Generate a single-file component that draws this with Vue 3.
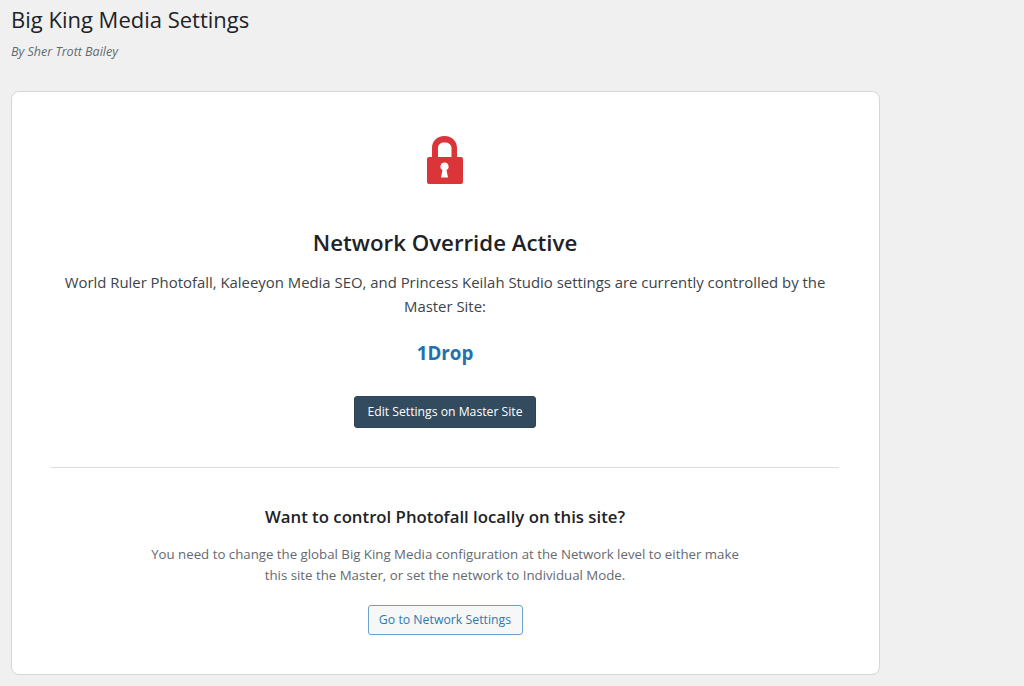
<script setup>
</script>

<template>
  <div class="page">
    <h1 class="title">Big King Media Settings</h1>
    <p class="byline">By Sher Trott Bailey</p>
    <section class="card">
      <svg class="lock" viewBox="0 0 38 48" width="38" height="48" aria-hidden="true">
        <path fill="#dc3539" d="M6 22V12C6 5 11 0 18.500 0S31 5 31 12V22H25.500V12C25.500 8.500 22.500 6.500 18.500 6.500S12 8.500 12 12V22Z"/>
        <path fill="#dc3539" fill-rule="evenodd" d="M3 21h32a2 2 0 0 1 2 2v23a2 2 0 0 1-2 2H3a2 2 0 0 1-2-2V23a2 2 0 0 1 2-2zM18.500 26.500a4 4 0 0 0-2 7.500l-1.500 7.500h7L20.500 34a4 4 0 0 0-2-7.500z"/>
      </svg>
      <h2 class="heading">Network Override Active</h2>
      <p class="lead">World Ruler Photofall, Kaleeyon Media SEO, and Princess Keilah Studio settings are currently controlled by the Master Site:</p>
      <div class="site">1Drop</div>
      <a class="btn primary">Edit Settings on Master Site</a>
      <hr class="rule" />
      <h3 class="subheading">Want to control Photofall locally on this site?</h3>
      <p class="note">You need to change the global Big King Media configuration at the Network level to either make this site the Master, or set the network to Individual Mode.</p>
      <a class="btn secondary">Go to Network Settings</a>
    </section>
  </div>
</template>

<style>
html, body { margin: 0; background: #f0f0f0; }
</style>

<style scoped>
.page {
  height: 686px;
  overflow: hidden;
  box-sizing: border-box;
  padding: 0 144px 0 11px;
  background: #f0f0f0;
  font-family: "Open Sans", "Noto Sans", sans-serif;
  color: #1d2327;
}
.title {
  margin: 0;
  padding-top: 4px;
  font-size: 22px;
  font-weight: 400;
  line-height: 30px;
}
.byline {
  margin: 9px 0 0;
  font-size: 12.500px;
  font-style: italic;
  line-height: 18px;
  color: #646970;
}
.card {
  margin-top: 30px;
  box-sizing: border-box;
  height: 584px;
  padding: 44px 40px 0 39px;
  display: flex;
  flex-direction: column;
  align-items: center;
  background: #fff;
  border: 1px solid #d5d6d8;
  border-radius: 8px;
  text-align: center;
}
.lock { display: block; }
.heading {
  margin: 43px 0 0;
  font-size: 22.250px;
  line-height: 32px;
  font-weight: 600;
}
.lead {
  margin: 11px 0 0;
  font-size: 14.900px;
  line-height: 24px;
  color: #3c434a;
  align-self: stretch;
}
.site {
  margin-top: 22px;
  font-size: 18.800px;
  line-height: 26px;
  font-weight: 700;
  color: #2271b1;
}
.btn {
  box-sizing: border-box;
  display: inline-block;
  border-radius: 3px;
  text-align: center;
}
.primary {
  margin-top: 30px;
  width: 182px;
  height: 32px;
  line-height: 30px;
  font-size: 12.200px;
  background: #334b5e;
  border: 1px solid #2f4456;
  color: #fff;
}
.rule {
  align-self: stretch;
  margin: 39px 0 0;
  border: 0;
  border-top: 1px solid #dcdcde;
}
.subheading {
  margin: 37px 0 0;
  font-size: 16.750px;
  line-height: 24px;
  font-weight: 600;
}
.note {
  margin: 15px 0 0;
  width: 600px;
  font-size: 13.250px;
  line-height: 21px;
  color: #646970;
}
.secondary {
  margin-top: 19px;
  width: 155px;
  height: 30px;
  line-height: 28px;
  font-size: 12.300px;
  background: #f6f7f7;
  border: 1px solid #6fa3cf;
  color: #2f77b2;
}
</style>
